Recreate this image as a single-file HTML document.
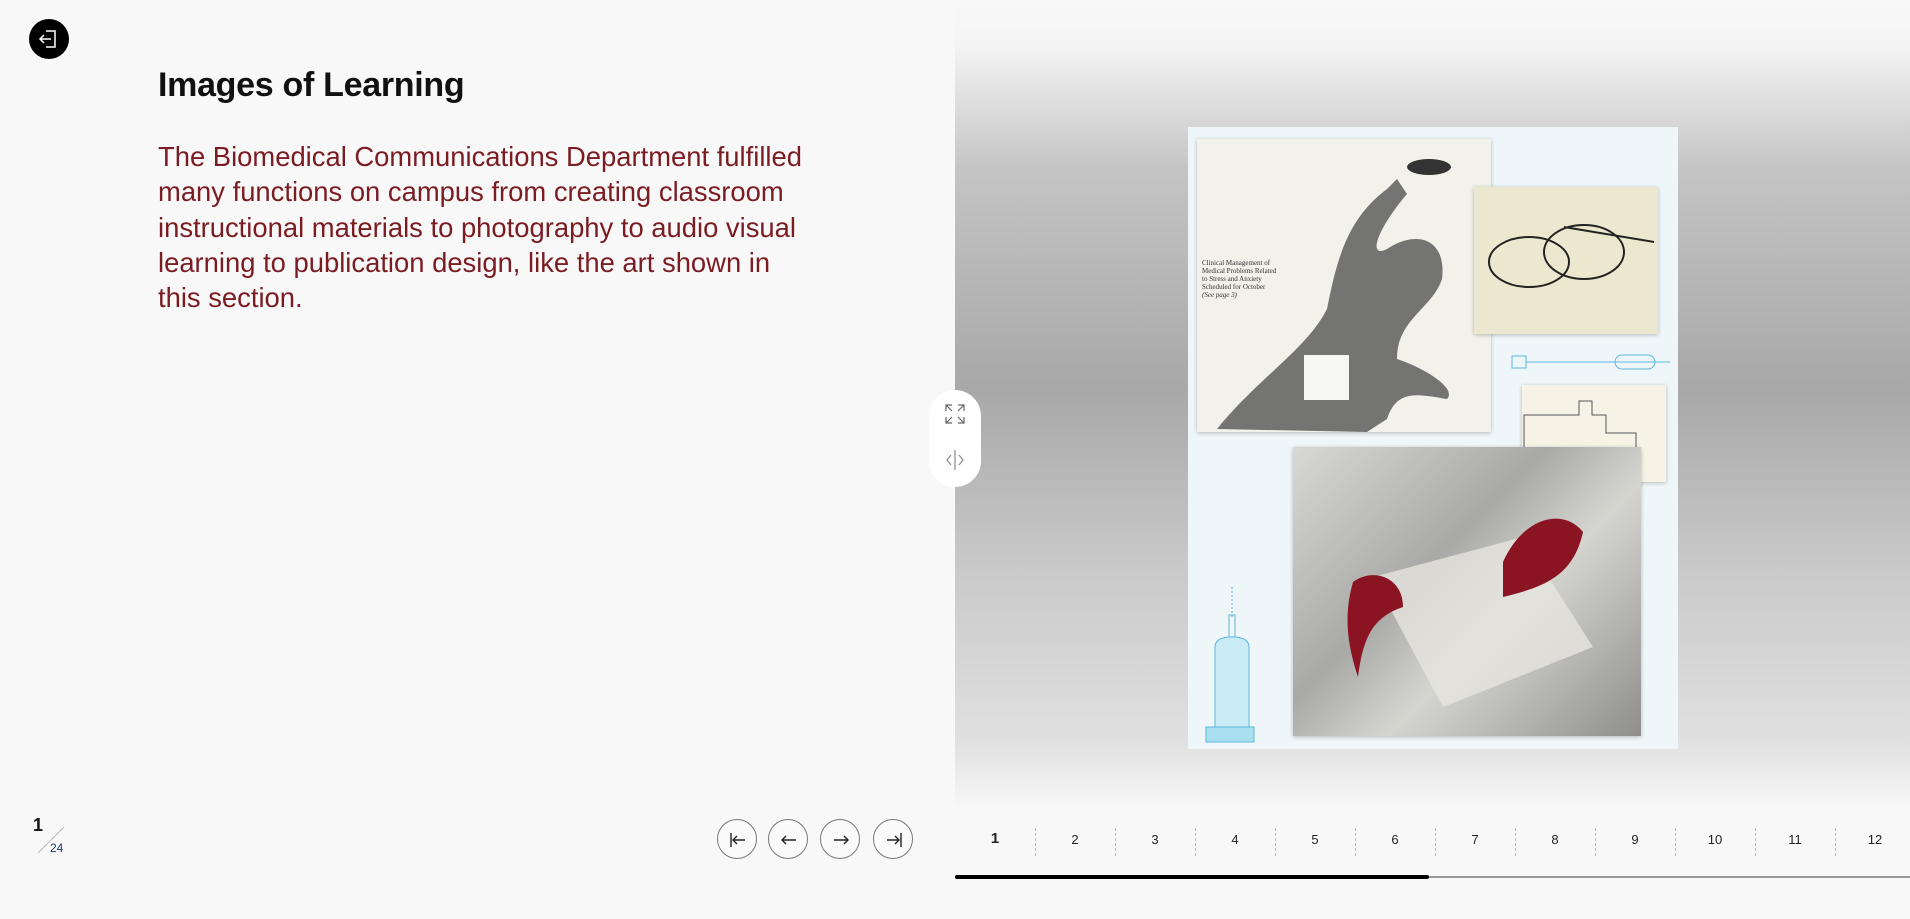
<!DOCTYPE html>
<html><head><meta charset="utf-8"><style>
*{margin:0;padding:0;box-sizing:border-box}
body{width:1910px;height:919px;overflow:hidden;background:#f8f8f8;font-family:"Liberation Sans",sans-serif;position:relative}
.left{position:absolute;left:0;top:0;width:955px;height:919px;background:#f8f8f8}
.exit{position:absolute;left:29px;top:19px;width:40px;height:40px;border-radius:50%;background:#000}
h1{position:absolute;left:158px;top:66px;font-size:34px;font-weight:bold;color:#111;letter-spacing:-0.3px}
p.txt{position:absolute;left:158px;top:139px;font-size:27.4px;line-height:35.3px;color:#7b1c22;white-space:nowrap}
.cnt1{position:absolute;left:33px;top:815px;font-size:18px;font-weight:bold;color:#111}
.cnt2{position:absolute;left:50px;top:841px;font-size:12px;color:#1a3a6a}
.nav{position:absolute;top:819px;width:40px;height:40px;border:1px solid #777;border-radius:50%;background:#fafafa}
.nav svg{position:absolute;left:9px;top:9px}
.right{position:absolute;left:955px;top:0;width:955px;height:805px;background:linear-gradient(#f8f8f8 0,#f4f4f4 45px,#c4c4c4 170px,#a8a8a8 390px,#c8c8c8 560px,#e0e0e0 740px,#f6f6f6 805px)}
.pill{position:absolute;left:929px;top:390px;width:52px;height:97px;border-radius:26px;background:#fff}
.pg{position:absolute;top:832px;width:40px;text-align:center;font-size:13px;color:#222}
.sep{position:absolute;top:828px;height:28px;border-left:1px dashed #bbb}
</style></head><body>
<div class="left">
 <div class="exit"><svg width="40" height="40" viewBox="0 0 40 40"><path d="M17 12h9v16h-9" fill="none" stroke="#fff" stroke-width="1.5"/><path d="M11 20h11M15 16l-4 4 4 4" fill="none" stroke="#fff" stroke-width="1.5"/></svg></div>
 <h1>Images of Learning</h1>
 <p class="txt">The Biomedical Communications Department fulfilled<br>many functions on campus from creating classroom<br>instructional materials to photography to audio visual<br>learning to publication design, like the art shown in<br>this section.</p>
 <div class="cnt1">1</div>
 <svg style="position:absolute;left:34px;top:823px" width="34" height="34"><line x1="4" y1="30" x2="30" y2="4" stroke="#bbb" stroke-width="1"/></svg>
 <div class="cnt2">24</div>
 <div class="nav" style="left:717px"><svg width="22" height="22"><path d="M4 4v14M18 11H6M10 7l-4 4 4 4" fill="none" stroke="#222" stroke-width="1.4"/></svg></div>
 <div class="nav" style="left:768px"><svg width="22" height="22"><path d="M18 11H4M8 7l-4 4 4 4" fill="none" stroke="#222" stroke-width="1.4"/></svg></div>
 <div class="nav" style="left:820px"><svg width="22" height="22"><path d="M4 11h14M14 7l4 4-4 4" fill="none" stroke="#222" stroke-width="1.4"/></svg></div>
 <div class="nav" style="left:873px"><svg width="22" height="22"><path d="M18 4v14M4 11h12M12 7l4 4-4 4" fill="none" stroke="#222" stroke-width="1.4"/></svg></div>
</div>
<div class="right"></div>
<div style="position:absolute;left:1188px;top:127px;width:490px;height:622px;background:#eef6f9">
 <div style="position:absolute;left:9px;top:12px;width:294px;height:293px;background:#f2f1ea;box-shadow:0 1px 4px rgba(0,0,0,.25)">
  <svg width="294" height="293"><path d="M20 290 C60 240 110 210 130 170 C140 120 150 80 190 50 L200 40 L210 55 C180 90 170 120 190 110 C220 90 250 100 245 140 C235 170 200 180 200 220 C230 230 260 250 250 260 C220 255 200 250 190 280 L170 293 Z" fill="#4a4a4a" opacity=".75"/><ellipse cx="232" cy="28" rx="22" ry="8" fill="#333"/><rect x="107" y="216" width="45" height="45" fill="#f6f6f2"/></svg>
  <div style="position:absolute;left:5px;top:120px;font-family:'Liberation Serif',serif;font-size:7px;line-height:8px;color:#333">Clinical Management of<br>Medical Problems Related<br>to Stress and Anxiety<br>Scheduled for October<br><i>(See page 3)</i></div>
 </div>
 <div style="position:absolute;left:286px;top:60px;width:184px;height:147px;background:#ece8d0;box-shadow:0 1px 4px rgba(0,0,0,.25)">
  <svg width="184" height="147"><ellipse cx="55" cy="75" rx="40" ry="25" fill="none" stroke="#222" stroke-width="2"/><ellipse cx="110" cy="65" rx="40" ry="27" fill="none" stroke="#222" stroke-width="2"/><path d="M90 40 L180 55" stroke="#222" stroke-width="2"/></svg>
 </div>
 <svg style="position:absolute;left:322px;top:222px" width="170" height="30"><rect x="2" y="7" width="14" height="12" fill="none" stroke="#5bb8dc"/><line x1="16" y1="13" x2="160" y2="13" stroke="#5bb8dc"/><rect x="105" y="6" width="40" height="14" rx="7" fill="none" stroke="#5bb8dc"/></svg>
 <div style="position:absolute;left:334px;top:258px;width:144px;height:97px;background:#f6f3e6;box-shadow:0 1px 4px rgba(0,0,0,.25)">
  <svg width="144" height="97"><path d="M2 30h55v-14h13v14h14v18h30v35H2z" fill="none" stroke="#555"/></svg>
 </div>
 <div style="position:absolute;left:105px;top:320px;width:348px;height:289px;background:linear-gradient(135deg,#d8d8d4,#a9a9a7 40%,#d5d5d0 60%,#8e8e8c);box-shadow:0 1px 4px rgba(0,0,0,.25)">
  <svg width="348" height="289"><path d="M80 130 L230 90 L300 200 L150 260 Z" fill="#e6e5de" opacity=".8"/><path d="M210 115 C230 70 270 60 290 85 C280 130 250 140 210 150 Z" fill="#8b1422"/><path d="M60 135 C80 120 110 130 110 160 C80 170 70 190 65 230 C55 200 50 170 60 135 Z" fill="#8b1422"/></svg>
 </div>
 <svg style="position:absolute;left:12px;top:460px" width="60" height="160"><path d="M32 0v30" stroke="#5bb8dc" stroke-dasharray="2 2"/><rect x="29" y="28" width="6" height="25" fill="none" stroke="#5bb8dc"/><path d="M15 60 Q15 50 32 50 Q49 50 49 60 V140 H15Z" fill="#c9ecf7" stroke="#5bb8dc"/><rect x="6" y="140" width="48" height="15" fill="#aadff0" stroke="#5bb8dc"/></svg>
</div>
<div class="pill">
 <svg style="position:absolute;left:14px;top:12px" width="24" height="24"><path d="M3 9V3h6M3 3l6 6M21 9V3h-6M21 3l-6 6M3 15v6h6M3 21l6-6M21 15v6h-6M21 21l-6-6" fill="none" stroke="#666" stroke-width="1.2"/></svg>
 <svg style="position:absolute;left:14px;top:58px" width="24" height="24"><path d="M12 2v20M8 7l-4 5 4 5M16 7l4 5-4 5" fill="none" stroke="#888" stroke-width="1.2"/></svg>
</div>
<div class="pg" style="left:975px;font-weight:bold;font-size:15px;top:830px">1</div>
<div class="pg" style="left:1055px">2</div><div class="pg" style="left:1135px">3</div><div class="pg" style="left:1215px">4</div><div class="pg" style="left:1295px">5</div><div class="pg" style="left:1375px">6</div><div class="pg" style="left:1455px">7</div><div class="pg" style="left:1535px">8</div><div class="pg" style="left:1615px">9</div><div class="pg" style="left:1695px">10</div><div class="pg" style="left:1775px">11</div><div class="pg" style="left:1855px">12</div>
<div class="sep" style="left:1035px"></div><div class="sep" style="left:1115px"></div><div class="sep" style="left:1195px"></div><div class="sep" style="left:1275px"></div><div class="sep" style="left:1355px"></div><div class="sep" style="left:1435px"></div><div class="sep" style="left:1515px"></div><div class="sep" style="left:1595px"></div><div class="sep" style="left:1675px"></div><div class="sep" style="left:1755px"></div><div class="sep" style="left:1835px"></div>
<div style="position:absolute;left:955px;top:876px;width:955px;height:2px;background:#999"></div>
<div style="position:absolute;left:955px;top:875px;width:474px;height:4px;border-radius:2px;background:#000"></div>
</body></html>
